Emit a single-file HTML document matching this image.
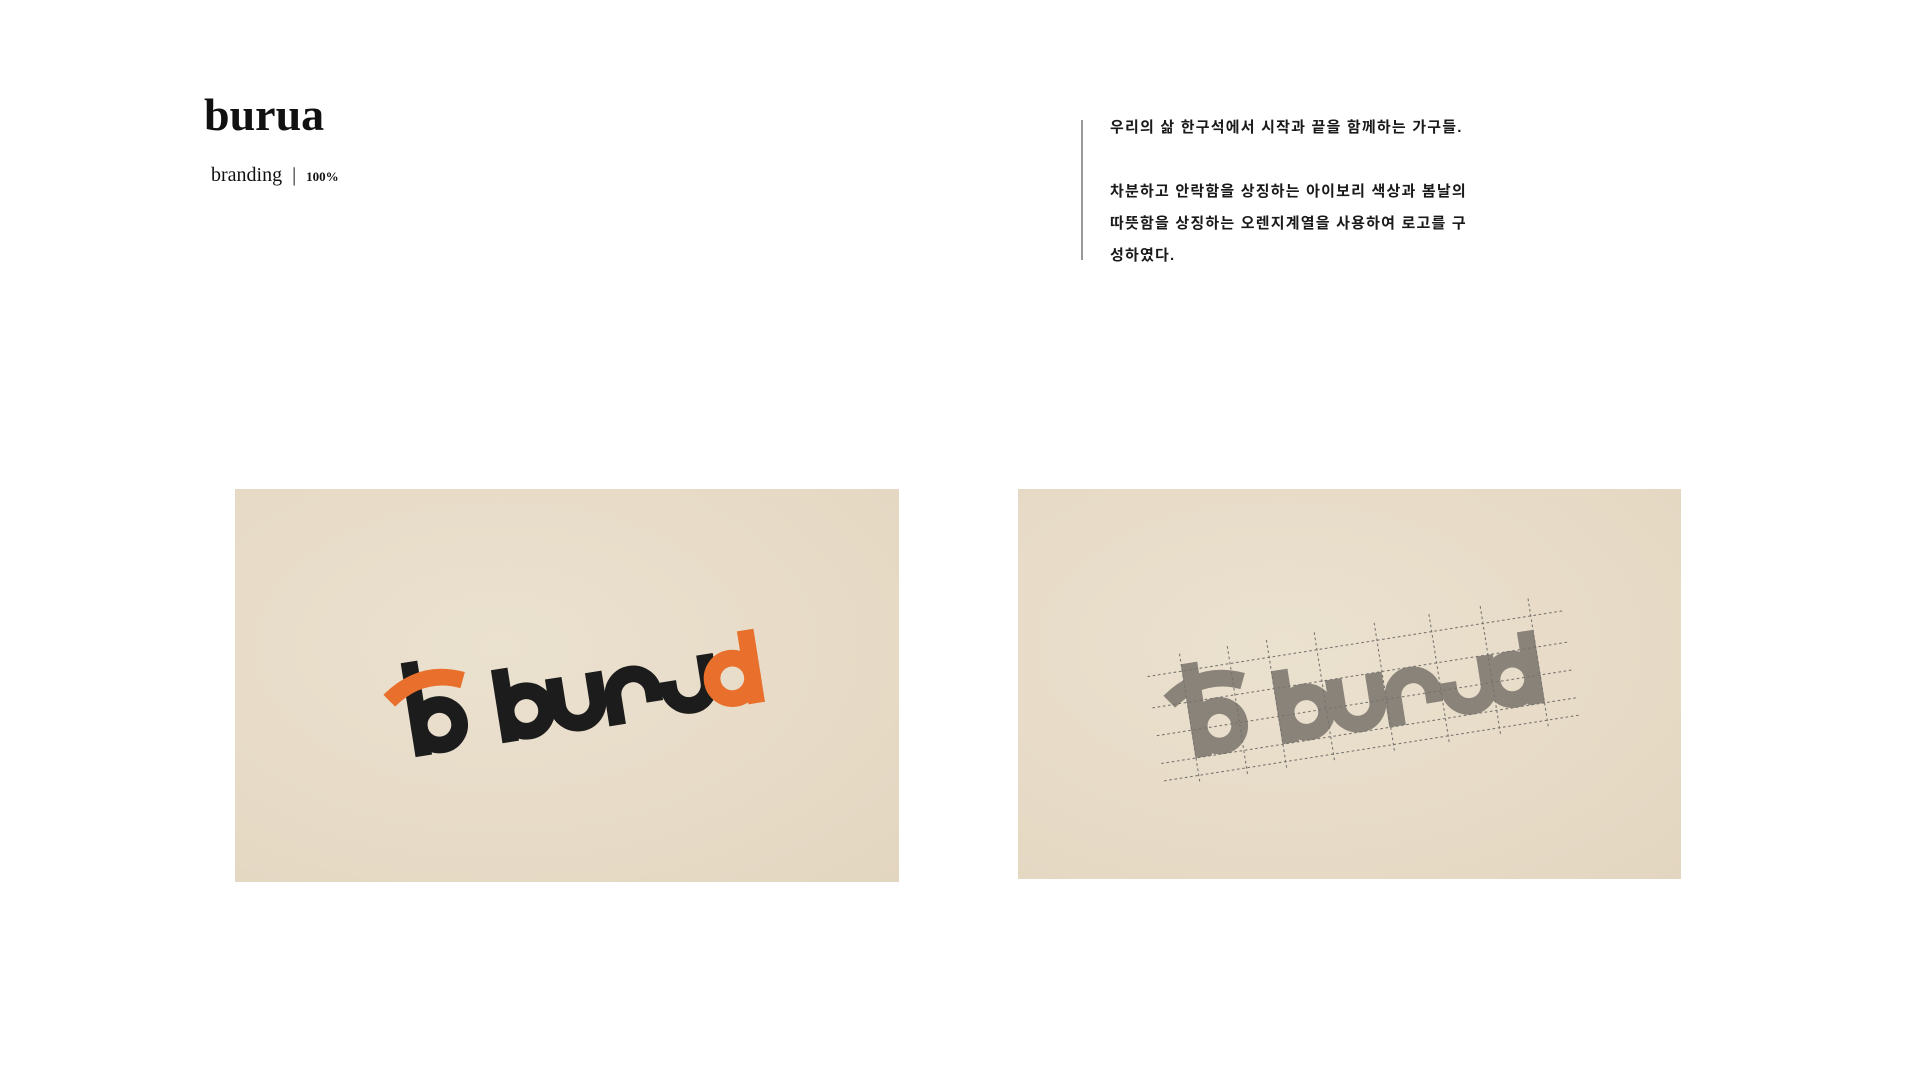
<!DOCTYPE html>
<html><head><meta charset="utf-8"><style>
html,body{margin:0;padding:0;background:#fff;}
body{width:1920px;height:1080px;position:relative;overflow:hidden;}
.t{position:absolute;white-space:nowrap;color:#111;}
.card{position:absolute;background:#e7dbc7;background-image:radial-gradient(ellipse at 40% 40%,#ebe1cf 0%,#e7dbc7 60%,#e3d6c0 100%);}
</style></head><body>
<div class="t" style="left:204px;top:88px;font:bold 46px 'Liberation Serif',serif;">burua</div>
<div class="t" style="left:211px;top:164px;font:20px 'Liberation Serif',serif;">branding&nbsp;&nbsp;|&nbsp;&nbsp;<span style="font-size:13px;font-weight:bold;">100%</span></div>
<div style="position:absolute;left:1081px;top:120px;width:2px;height:140px;background:#999;"></div>
<div class="t" style="left:1110px;top:112px;font:600 15px 'Liberation Sans','Noto Sans CJK KR',sans-serif;line-height:32px;letter-spacing:1.2px;color:#1a1a1a;">우리의 삶 한구석에서 시작과 끝을 함께하는 가구들.<br><br>차분하고 안락함을 상징하는 아이보리 색상과 봄날의<br>따뜻함을 상징하는 오렌지계열을 사용하여 로고를 구<br>성하였다.</div>

<div class="card" style="left:235px;top:489px;width:664px;height:393px;"></div>
<div class="card" style="left:1018px;top:489px;width:663px;height:390px;"></div>

<svg width="1920" height="1080" style="position:absolute;left:0;top:0;">
<defs>
<g id="logo" fill="none" stroke-width="19">
<line x1="9" y1="-108" x2="9" y2="0" stroke="var(--k)"/>
<circle cx="32" cy="-32" r="23" stroke="var(--k)"/>
<path d="M-20 -68 Q 22 -98 66 -78" stroke="var(--o)"/>
<line x1="109" y1="-84" x2="109" y2="0" stroke="var(--k)"/>
<circle cx="132" cy="-32" r="23" stroke="var(--k)"/>
<path d="M168 -64 V-32 A23 23 0 0 0 214 -32 V-64" stroke="var(--k)"/>
<path d="M232 0 V-32 A23 23 0 0 1 278 -32 V-20" stroke="var(--k)"/>
<path d="M296 -40 V-32 A23 23 0 0 0 342 -32 V-64" stroke="var(--k)"/>
<circle cx="369" cy="-32" r="23" stroke="var(--o)"/>
<line x1="392" y1="-84" x2="392" y2="0" stroke="var(--o)"/>
</g>
</defs>
<g transform="translate(416,757) rotate(-9) scale(0.88)" style="--k:#1c1c1c;--o:#e8702c">
<use href="#logo"/>
</g>
<g transform="translate(1196,758) rotate(-9) scale(0.88)" style="--k:#6f6a63;--o:#6f6a63" opacity="0.78">
<use href="#logo"/>
<g stroke="#555" stroke-width="1.2" stroke-dasharray="3 3" fill="none">
<line x1="-40" y1="0" x2="440" y2="0"/><line x1="-40" y1="-32" x2="440" y2="-32"/>
<line x1="-40" y1="-64" x2="440" y2="-64"/><line x1="-40" y1="-100" x2="440" y2="-100"/>
<line x1="-40" y1="20" x2="440" y2="20"/>
<line x1="0" y1="-120" x2="0" y2="30"/><line x1="55" y1="-120" x2="55" y2="30"/>
<line x1="100" y1="-120" x2="100" y2="30"/><line x1="155" y1="-120" x2="155" y2="30"/>
<line x1="224" y1="-120" x2="224" y2="30"/><line x1="287" y1="-120" x2="287" y2="30"/>
<line x1="346" y1="-120" x2="346" y2="30"/><line x1="401" y1="-120" x2="401" y2="30"/>
</g>
</g>
</svg>
</body></html>
